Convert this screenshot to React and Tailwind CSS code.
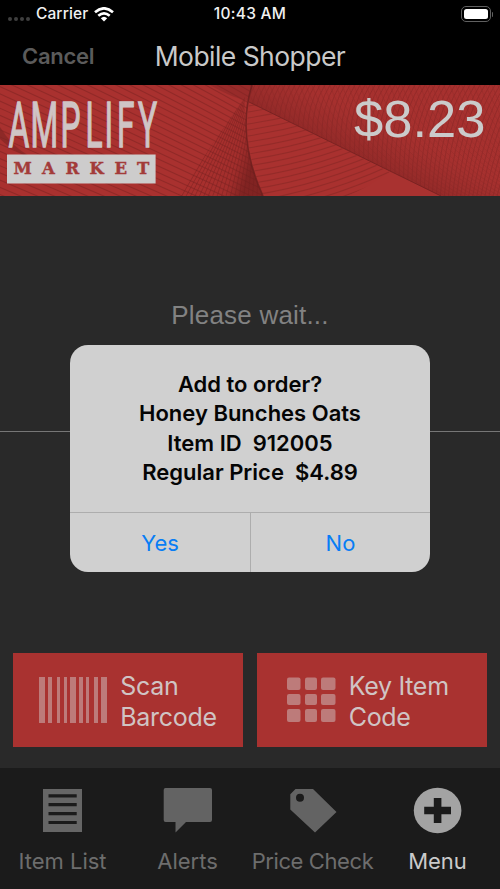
import React from 'react';

const range = (n) => Array.from({ length: n }, (_, i) => i);

function BannerArt() {
  return (
    <svg className="block h-[111px] w-[500px]" viewBox="0 0 500 111" fill="none">
      <defs>
        <linearGradient id="mesh" x1="195" y1="50" x2="255" y2="70" gradientUnits="userSpaceOnUse">
          <stop offset="0.2" stopColor="#8c2926" stopOpacity="0" />
          <stop offset="0.75" stopColor="#7c2220" stopOpacity="0.15" />
          <stop offset="1" stopColor="#701e1d" stopOpacity="0.7" />
        </linearGradient>
        <linearGradient id="fold" x1="345" y1="64" x2="363" y2="28" gradientUnits="userSpaceOnUse">
          <stop offset="0" stopColor="#782120" stopOpacity="0.45" />
          <stop offset="1" stopColor="#8a2927" stopOpacity="0.08" />
        </linearGradient>
        <clipPath id="left"><path d="M0 0H252Q236 52 263 111H0Z" /></clipPath>
        <clipPath id="fan"><path d="M178 111Q211 60 245 12Q242 60 263 111Z" /></clipPath>
        <clipPath id="upper"><path d="M252 0H500V111H441L249 17Z" /></clipPath>
        <clipPath id="lower"><path d="M249 17L390 87Q365 104 347 111H263Q247 70 247 40Z" /></clipPath>
      </defs>
      <rect width="500" height="111" fill="#a93230" />
      <g clipPath="url(#left)" stroke="#852625" strokeWidth="1.1" opacity="0.65">
        {range(50).map((i) => (
          <path key={i} d={`M-10 ${-190 + i * 7.2}Q120 ${-126 + i * 7} 270 ${-30 + i * 6}`} />
        ))}
      </g>
      <path d="M0 42Q12 62 31 72Q12 66 0 54Z" fill="#7d2423" opacity="0.6" />
      <g clipPath="url(#fan)" stroke="#742120" strokeWidth="1" opacity="0.45">
        {range(24).map((i) => (
          <path key={i} d={`M${176 + i * 4.5} 113Q${209 + i * 2.8} 60 ${242 + i * 1} 4`} />
        ))}
      </g>
      <path d="M178 111Q211 60 245 12Q240 60 263 111Z" fill="url(#mesh)" />
      <path d="M210 0Q232 13 249 16L252 0Z" fill="#802422" opacity="0.4" />
      <path d="M252 0H500V111H441L249 17Z" fill="url(#fold)" />
      <g clipPath="url(#upper)" stroke="#822524" strokeWidth="1" opacity="0.5">
        {range(75).map((i) => (
          <path key={i} d={`M${250 + i * 5} 0Q${225 + i * 5} 40 ${264 + i * 4} 115`} />
        ))}
        {range(50).map((i) => (
          <path key={i} opacity="0.5" d={`M${238 + i * 6} -4Q${265 + i * 6} 70 ${350 + i * 6} 115`} />
        ))}
      </g>
      <g clipPath="url(#lower)" stroke="#8a2927" strokeWidth="1.1" opacity="0.65">
        {range(23).map((i) => (
          <path key={i} d={`M240 ${22 + i * 6}Q320 ${12 + i * 6} 400 ${-26 + i * 6}`} />
        ))}
      </g>
      <path d="M249 17L441 111" stroke="#732120" strokeWidth="1" opacity="0.8" />
      <path d="M252 0Q236 52 263 111" stroke="#6d1f1e" strokeWidth="1.6" opacity="0.8" />
      <text
        transform="scale(0.5 1)"
        x="17 61 121 171 209 234 276"
        y="61.7"
        fill="#cfc5c5"
        stroke="#cfc5c5"
        strokeWidth="1.4"
        fontFamily="Roboto, sans-serif"
        fontWeight="400"
        fontSize="63.5"
      >
        AMPLIFY
      </text>
      <rect x="7" y="69.5" width="148.6" height="29" fill="#cdcccc" />
      <text
        x="13.5 42 65.5 89.5 114.5 137"
        y="88.7"
        fill="#a33b39"
        stroke="#a33b39"
        strokeWidth="0.4"
        fontFamily="DejaVu Serif, serif"
        fontWeight="700"
        fontSize="16.5"
      >
        MARKET
      </text>
    </svg>
  );
}

function StatusBar() {
  return (
    <div className="grid h-[28px] grid-cols-3 items-center font-medium text-[#f1f1f1]">
      <div className="flex items-center pl-[8px]">
        <div className="flex gap-[2px] pt-[9px]">
          {range(4).map((i) => <span key={i} className="size-[4px] rounded-full bg-[#3f3f3f]" />)}
        </div>
        <span className="ml-[6px] text-[15.5px] leading-[28px] tracking-[0.1px]">Carrier</span>
        <svg className="ml-[6px] h-[15px] w-[20px]" viewBox="0 0 20 15" fill="none" stroke="#fff" strokeWidth="2.6">
          <path d="M1 5.3Q10-2.7 19 5.3" />
          <path d="M4.3 8.8Q10 3.8 15.7 8.8" />
          <path d="M6.8 11.2Q10 8.2 13.2 11.2L10 14.4Z" fill="#fff" stroke="none" />
        </svg>
      </div>
      <div className="text-center text-[15.5px] leading-[28px] tracking-[0.25px] whitespace-nowrap">10:43 AM</div>
      <div className="flex items-center justify-end pr-[7px]">
        <div className="h-[16px] w-[30px] rounded-[5px] border border-[#606060] p-[2px]">
          <div className="h-full w-full rounded-[2.5px] bg-white" />
        </div>
        <div className="ml-[1px] h-[5px] w-[1.5px] rounded-r bg-[#606060]" />
      </div>
    </div>
  );
}

const bars = [[0, 6], [9, 4], [18, 3], [25, 3], [31, 6], [40, 4], [47, 3], [55, 4], [62, 6]];

function BarcodeIcon() {
  return (
    <svg className="h-[46px] w-[68px]" viewBox="0 0 68 46" fill="#bd7b7a">
      {bars.map(([x, w]) => <rect key={x} x={x} width={w} height="46" />)}
    </svg>
  );
}

function KeypadIcon() {
  return (
    <svg className="h-[46px] w-[49px]" viewBox="0 0 49 46" fill="#bd7b7a">
      {[[0, 13.5], [18, 12], [34, 14.5]].map(([x, w]) =>
        [[0.5, 12.5], [17, 11], [32, 13]].map(([y, h]) => (
          <rect key={`${x}-${y}`} x={x} y={y} width={w} height={h} rx="2" />
        ))
      )}
    </svg>
  );
}

function ListIcon() {
  return (
    <svg className="h-[50px] w-[50px]" viewBox="0 0 50 50">
      <rect x="5" y="4" width="39" height="43" fill="#666" />
      <path d="M10.5 10.8H38.7M10.5 19.7H38.7M10.5 28.6H38.7M10.5 37.5H38.7" stroke="#1b1b1b" strokeWidth="3.2" />
    </svg>
  );
}

function ChatIcon() {
  return (
    <svg className="h-[50px] w-[50px]" viewBox="0 0 50 50" fill="#636363">
      <path d="M2.5 3H47Q49 3 49 5V35Q49 37 47 37H23L12.5 47.5V37H2.5Q.7 37 .7 35V5Q.7 3 2.5 3Z" />
    </svg>
  );
}

function TagIcon() {
  return (
    <svg className="h-[50px] w-[50px]" viewBox="0 0 50 50" fill="#636363">
      <path fillRule="evenodd" d="M7.5 4H25L48.5 27L27 47.5L2.3 24.5V9.2ZM12 8.8a4 4 0 1 0 0 8a4 4 0 1 0 0-8Z" />
    </svg>
  );
}

function PlusIcon() {
  return (
    <svg className="h-[50px] w-[50px]" viewBox="0 0 50 50">
      <ellipse cx="24.6" cy="25.5" rx="23.8" ry="22.8" fill="#a3a3a3" />
      <path d="M24.6 13V38M11.2 25.5H38" stroke="#1b1b1b" strokeWidth="7.6" />
    </svg>
  );
}

const tabs = [
  { label: 'Item List', Icon: ListIcon, color: 'text-[#6d6d6d]', tracking: '' },
  { label: 'Alerts', Icon: ChatIcon, color: 'text-[#6d6d6d]', tracking: '' },
  { label: 'Price Check', Icon: TagIcon, color: 'text-[#6d6d6d]', tracking: 'tracking-[-0.4px]' },
  { label: 'Menu', Icon: PlusIcon, color: 'text-[#cacaca]', tracking: '' },
];

export default function App() {
  return (
    <div className="flex h-[889px] w-[500px] flex-col overflow-hidden bg-[#292929] font-['Inter',sans-serif]">
      <header className="h-[85px] bg-black">
        <StatusBar />
        <div className="grid h-[56px] grid-cols-[120px_260px_120px] items-center">
          <button className="pl-[22px] text-left text-[22px] leading-[56px] font-semibold tracking-[-0.3px] text-[#5b5b5b]">Cancel</button>
          <h1 className="text-center text-[26.5px] leading-[56px] tracking-[-0.55px] text-[#c9c9c9]">Mobile Shopper</h1>
        </div>
      </header>

      <section className="relative h-[111px]">
        <BannerArt />
        <div className="absolute top-[4px] right-[14.5px] font-['Liberation_Sans',sans-serif] text-[52.5px] leading-[60px] text-[#cbcbcb]">$8.23</div>
      </section>

      <main className="relative flex h-[572px] flex-col">
        <p className="mt-[102px] text-center font-['Liberation_Sans',sans-serif] text-[26px] leading-[34px] tracking-[0.2px] text-[#828282]">Please wait...</p>
        <div className="mt-[99px] h-px bg-[#767676]" />
        <div className="mt-auto flex gap-[13.4px] px-[13.3px] pb-[21px]">
          <button className="flex h-[94px] w-[230px] items-center bg-[#a93230] pl-[26px] text-left">
            <BarcodeIcon />
            <span className="ml-[13px] pt-[3px] text-[25px] leading-[31px] tracking-[-0.3px] text-[#d0c4c4]">Scan<br />Barcode</span>
          </button>
          <button className="flex h-[94px] w-[230px] items-center bg-[#a93230] pl-[30.3px] text-left">
            <KeypadIcon />
            <span className="ml-[12.7px] pt-[3px] text-[25px] leading-[31px] tracking-[-0.3px] text-[#d0c4c4]">Key Item<br />Code</span>
          </button>
        </div>

        <div role="dialog" className="absolute top-[149px] left-[70px] flex h-[227px] w-[360px] flex-col overflow-hidden rounded-[18px] bg-[#d0d0d0]">
          <div className="h-[167px] pt-[25px] text-center text-[22px] leading-[29.4px] font-semibold whitespace-pre text-[#050505]">
            <p>Add to order?</p>
            <p>Honey Bunches Oats</p>
            <p>{'Item ID  912005'}</p>
            <p>{'Regular Price  $4.89'}</p>
          </div>
          <div className="grid flex-1 grid-cols-[181px_179px] border-t border-[#adadad] text-[22px] text-[#087df5]">
            <button className="border-r border-[#adadad] pt-[1px]">Yes</button>
            <button className="pt-[1px]">No</button>
          </div>
        </div>
      </main>

      <nav className="grid h-[121px] grid-cols-4 bg-[#1b1b1b] pt-[17px]">
        {tabs.map(({ label, Icon, color, tracking }) => (
          <div key={label} className={`flex flex-col items-center ${color}`}>
            <Icon />
            <span className={`mt-[11px] text-[22px] leading-[30px] whitespace-nowrap ${tracking}`}>{label}</span>
          </div>
        ))}
      </nav>
    </div>
  );
}
